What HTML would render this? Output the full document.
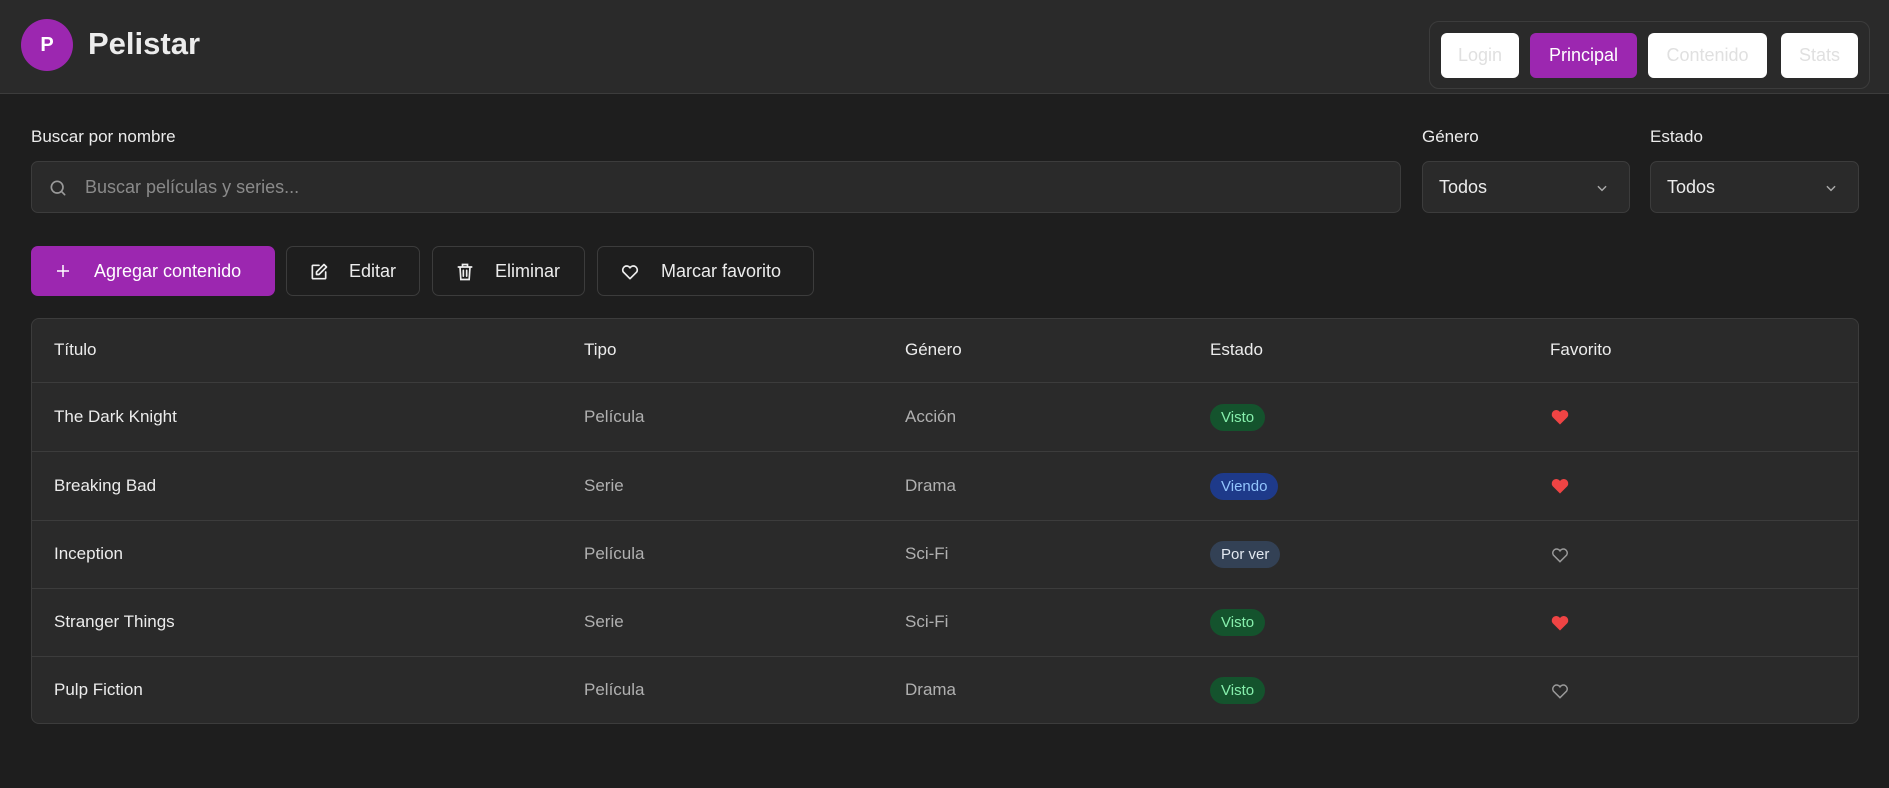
<!DOCTYPE html>
<html><head><meta charset="utf-8"><style>
*{box-sizing:border-box;margin:0;padding:0}
body{width:1889px;height:788px;background:#1e1e1e;font-family:"Liberation Sans",sans-serif;color:#ececec;position:relative;overflow:hidden}
.hdr{position:absolute;left:0;top:0;width:1889px;height:94px;background:#2a2a2a;border-bottom:1px solid #3c3c3c}
.logo{position:absolute;left:21px;top:19px;width:52px;height:52px;border-radius:50%;background:#9c27b0;color:#fff;font-weight:bold;font-size:20px;text-align:center;line-height:52px}
.title{position:absolute;left:88px;top:26px;font-size:31px;font-weight:bold;color:#ececec}
.nav{position:absolute;left:1429px;top:21px;width:441px;height:68px;border:1px solid #3c3c3c;border-radius:10px}
.nb{position:absolute;top:11px;height:45px;border-radius:6px;background:#fff;color:#e0e0e0;font-size:18px;text-align:center;line-height:45px}
.lbl{position:absolute;top:127px;font-size:17px;color:#ececec}
.inp{position:absolute;top:161px;height:52px;background:#2a2a2a;border:1px solid #3c3c3c;border-radius:7px;font-size:18px;line-height:50px}
.btn{position:absolute;top:246px;height:50px;border:1px solid #3c3c3c;border-radius:7px;font-size:18px;line-height:48px;color:#ececec}
.btn svg{position:absolute;top:15px}
.tbl{position:absolute;left:31px;top:318px;width:1828px;height:406px;background:#2a2a2a;border:1px solid #3c3c3c;border-radius:8px;overflow:hidden}
.row{position:absolute;left:0;width:1828px;border-bottom:1px solid #3c3c3c;font-size:17px}
.row span{position:absolute;top:0}
.row span.h{top:24px;line-height:0}
.row span.h svg{display:block}
.badge{display:inline-block;height:27px;line-height:27px;border-radius:14px;padding:0 11px;font-size:15px;font-style:normal}
.v{background:#14532d;color:#86efac}.w{background:#1e3a8a;color:#93c5fd}.p{background:#334155;color:#e2e8f0}
</style></head><body>
<div class="hdr">
<div class="logo">P</div><div class="title">Pelistar</div>
<div class="nav">
<div class="nb" style="left:11px;width:78px">Login</div>
<div class="nb" style="left:100px;width:107px;background:#9c27b0;color:#fff">Principal</div>
<div class="nb" style="left:218px;width:119px">Contenido</div>
<div class="nb" style="left:351px;width:77px">Stats</div>
</div></div>
<div class="lbl" style="left:31px">Buscar por nombre</div>
<div class="lbl" style="left:1422px">Género</div>
<div class="lbl" style="left:1650px">Estado</div>
<div class="inp" style="left:31px;width:1370px;padding-left:53px;color:#8a8a8a">
<svg style="position:absolute;left:16px;top:16px" width="20" height="20" viewBox="0 0 24 24" fill="none" stroke="#9a9a9a" stroke-width="2" stroke-linecap="round"><circle cx="11" cy="11" r="7"/><path d="M20 20l-4-4"/></svg>Buscar películas y series...</div>
<div class="inp" style="left:1422px;width:208px;padding-left:16px">Todos<svg style="position:absolute;right:20px;top:19px" width="14" height="14" viewBox="0 0 24 24" fill="none" stroke="#aaa" stroke-width="2.5"><path d="M5 9l7 7 7-7"/></svg></div>
<div class="inp" style="left:1650px;width:209px;padding-left:16px">Todos<svg style="position:absolute;right:20px;top:19px" width="14" height="14" viewBox="0 0 24 24" fill="none" stroke="#aaa" stroke-width="2.5"><path d="M5 9l7 7 7-7"/></svg></div>
<div class="btn" style="left:31px;width:244px;background:#9c27b0;border-color:#9c27b0;color:#fff;padding-left:62px"><svg style="left:22px" width="18" height="18" viewBox="0 0 24 24" fill="none" stroke="#fff" stroke-width="2"><path d="M12 4v16M4 12h16"/></svg>Agregar contenido</div>
<div class="btn" style="left:286px;width:134px;padding-left:62px"><svg style="left:22px" width="20" height="20" viewBox="0 0 24 24" fill="none" stroke="#eee" stroke-width="2" stroke-linecap="round" stroke-linejoin="round"><path d="M12 4H5a1 1 0 0 0-1 1v14a1 1 0 0 0 1 1h14a1 1 0 0 0 1-1v-7"/><path d="M18 3l3 3-9 9H9v-3z"/></svg>Editar</div>
<div class="btn" style="left:432px;width:153px;padding-left:62px"><svg style="left:22px" width="20" height="20" viewBox="0 0 24 24" fill="none" stroke="#eee" stroke-width="2" stroke-linecap="round"><path d="M4 6h16M9 6V3h6v3M6 6l1 15h10l1-15M10 10v7M14 10v7"/></svg>Eliminar</div>
<div class="btn" style="left:597px;width:217px;padding-left:63px"><svg style="left:22px" width="20" height="20" viewBox="0 0 24 24" fill="none" stroke="#eee" stroke-width="2" stroke-linejoin="round"><path d="M12 20l-8-8a4.5 4.5 0 0 1 8-5 4.5 4.5 0 0 1 8 5z"/></svg>Marcar favorito</div>
<div class="tbl">
<div class="row" style="top:0;height:64px;line-height:62px"><span style="left:22px">Título</span><span style="left:552px">Tipo</span><span style="left:873px">Género</span><span style="left:1178px">Estado</span><span style="left:1518px">Favorito</span></div>
<div class="row" style="top:64px;height:69px;line-height:67px"><span style="left:22px">The Dark Knight</span><span style="left:552px;color:#b0b0b0">Película</span><span style="left:873px;color:#b0b0b0">Acción</span><span style="left:1178px"><i class="badge v">Visto</i></span><span class="h" style="left:1518px"><svg width="20" height="20" viewBox="0 0 24 24"><path d="M12 21l-9-9a5 5 0 0 1 9-6 5 5 0 0 1 9 6z" fill="#ef4444"/></svg></span></div>
<div class="row" style="top:133px;height:69px;line-height:67px"><span style="left:22px">Breaking Bad</span><span style="left:552px;color:#b0b0b0">Serie</span><span style="left:873px;color:#b0b0b0">Drama</span><span style="left:1178px"><i class="badge w">Viendo</i></span><span class="h" style="left:1518px"><svg width="20" height="20" viewBox="0 0 24 24"><path d="M12 21l-9-9a5 5 0 0 1 9-6 5 5 0 0 1 9 6z" fill="#ef4444"/></svg></span></div>
<div class="row" style="top:202px;height:68px;line-height:66px"><span style="left:22px">Inception</span><span style="left:552px;color:#b0b0b0">Película</span><span style="left:873px;color:#b0b0b0">Sci-Fi</span><span style="left:1178px"><i class="badge p">Por ver</i></span><span class="h" style="left:1518px"><svg width="20" height="20" viewBox="0 0 24 24"><path d="M12 20l-8-8a4.5 4.5 0 0 1 8-5 4.5 4.5 0 0 1 8 5z" fill="none" stroke="#999" stroke-width="1.8"/></svg></span></div>
<div class="row" style="top:270px;height:68px;line-height:66px"><span style="left:22px">Stranger Things</span><span style="left:552px;color:#b0b0b0">Serie</span><span style="left:873px;color:#b0b0b0">Sci-Fi</span><span style="left:1178px"><i class="badge v">Visto</i></span><span class="h" style="left:1518px"><svg width="20" height="20" viewBox="0 0 24 24"><path d="M12 21l-9-9a5 5 0 0 1 9-6 5 5 0 0 1 9 6z" fill="#ef4444"/></svg></span></div>
<div class="row" style="top:338px;height:68px;line-height:66px;border-bottom:none"><span style="left:22px">Pulp Fiction</span><span style="left:552px;color:#b0b0b0">Película</span><span style="left:873px;color:#b0b0b0">Drama</span><span style="left:1178px"><i class="badge v">Visto</i></span><span class="h" style="left:1518px"><svg width="20" height="20" viewBox="0 0 24 24"><path d="M12 20l-8-8a4.5 4.5 0 0 1 8-5 4.5 4.5 0 0 1 8 5z" fill="none" stroke="#999" stroke-width="1.8"/></svg></span></div>
</div>
</body></html>
